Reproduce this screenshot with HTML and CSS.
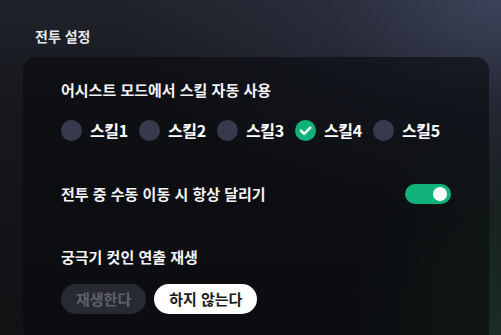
FILE: index.html
```html
<!DOCTYPE html>
<html lang="ko">
<head>
<meta charset="utf-8">
<link rel="stylesheet" href="styles.css">
</head>
<body>
<div class="page">
  <h1 class="title">전투 설정</h1>
  <section class="card">
    <div class="label">어시스트 모드에서 스킬 자동 사용</div>
    <div class="skills">
      <div class="skill"><span class="radio"></span><span class="skill-name">스킬1</span></div>
      <div class="skill"><span class="radio"></span><span class="skill-name">스킬2</span></div>
      <div class="skill"><span class="radio"></span><span class="skill-name">스킬3</span></div>
      <div class="skill"><span class="radio on"><svg viewBox="0 0 22 22" width="21" height="21"><path d="M6.2 11.2 L9.6 14.6 L16 8" fill="none" stroke="#fff" stroke-width="2.6" stroke-linecap="round" stroke-linejoin="round"/></svg></span><span class="skill-name">스킬4</span></div>
      <div class="skill"><span class="radio"></span><span class="skill-name">스킬5</span></div>
    </div>
    <div class="row toggle-row">
      <div class="label">전투 중 수동 이동 시 항상 달리기</div>
      <span class="toggle"><span class="knob"></span></span>
    </div>
    <div class="label cutin">궁극기 컷인 연출 재생</div>
    <div class="buttons">
      <span class="btn">재생한다</span>
      <span class="btn active">하지 않는다</span>
    </div>
  </section>
</div>
</body>
</html>
```
FILE: styles.css
```css
html, body {
  margin: 0;
  padding: 0;
  height: 100%;
}
body {
  font-family: "Noto Sans CJK KR", "Noto Sans", sans-serif;
  color: #fff;
  overflow: hidden;
  background:
    radial-gradient(ellipse 380px 220px at 100% 0%, rgba(62, 68, 92, 0.95) 0%, rgba(50, 55, 75, 0.5) 45%, rgba(30, 33, 42, 0) 100%),
    radial-gradient(ellipse 150px 240px at 100% 100%, rgba(30, 52, 40, 0.8) 0%, rgba(22, 34, 30, 0) 100%),
    linear-gradient(180deg, #20232b 0%, #16181d 30%, #111214 100%);
}
.page {
  height: 100%;
  box-sizing: border-box;
  padding: 26px 12px 0 23px;
  display: flex;
  flex-direction: column;
}
.title {
  margin: 0 0 11px 12px;
  font-size: 14px;
  line-height: 20px;
  font-weight: 700;
  color: #e6e7ea;
}
.card {
  flex: 1;
  width: 466px;
  box-sizing: border-box;
  border-radius: 14px 14px 0 0;
  background: rgba(9, 10, 14, 0.6);
  padding: 23px 38px 0 38px;
}
.label {
  font-size: 15px;
  line-height: 20px;
  font-weight: 700;
  color: #f4f4f6;
}
.skills {
  display: flex;
  margin-top: 19px;
}
.skill {
  display: flex;
  align-items: center;
  width: 78px;
  height: 22px;
}
.radio {
  width: 21px;
  height: 21px;
  border-radius: 50%;
  background: #373a4d;
  flex: none;
  display: flex;
  align-items: center;
  justify-content: center;
}
.radio.on {
  background: #11b27a;
}
.skill-name {
  margin-left: 8px;
  font-size: 16px;
  font-weight: 700;
  line-height: 22px;
  color: #fff;
  letter-spacing: -0.4px;
}
.row {
  display: flex;
  align-items: center;
  justify-content: space-between;
}
.toggle-row {
  margin-top: 43px;
}
.toggle {
  width: 46px;
  height: 20px;
  border-radius: 10px;
  background: #11b27a;
  display: flex;
  align-items: center;
  justify-content: flex-end;
  padding-right: 4px;
  box-sizing: border-box;
}
.knob {
  width: 14px;
  height: 14px;
  border-radius: 50%;
  background: #fff;
}
.cutin {
  margin-top: 43px;
}
.buttons {
  display: flex;
  gap: 8px;
  margin-top: 17px;
}
.btn {
  height: 30px;
  border-radius: 15px;
  padding: 0 15px;
  background: #272a33;
  color: #5e626d;
  font-size: 15px;
  font-weight: 700;
  line-height: 30px;
}
.btn.active {
  background: #fff;
  color: #1b1c20;
}
```
